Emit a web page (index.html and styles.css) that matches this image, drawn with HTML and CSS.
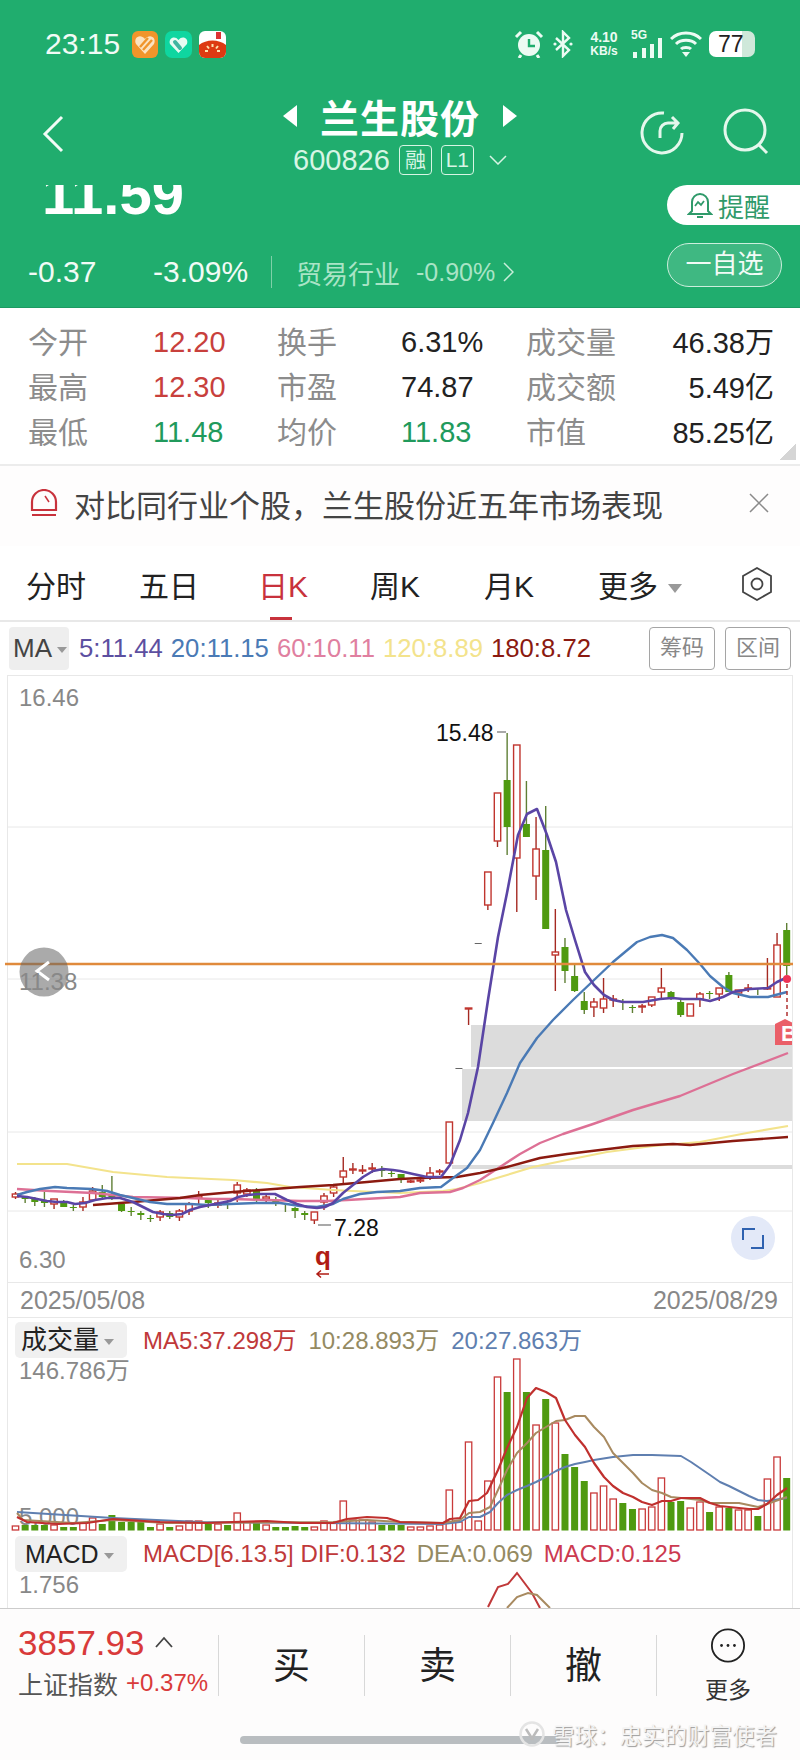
FILE: index.html
```html
<!DOCTYPE html>
<html lang="zh-CN">
<head>
  <meta charset="UTF-8" />
  <title>兰生股份</title>
  <link rel="stylesheet" href="styles.css">
</head>
<body>
  <div class="top">
    <div class="status">
      <span class="clock">23:15</span>
      <div class="apps">
        <svg width="26" height="27" viewBox="0 0 26 27"><rect width="26" height="27" rx="6" fill="#f0952b"/><path d="M13 23 L4 13 C1 7 8 2 13 8 C18 2 25 7 22 13 Z" fill="#fbe3c0"/><path d="M8 16 L16 7 M11 19 L20 9" stroke="#f0952b" stroke-width="2.4"/></svg>
        <svg width="27" height="27" viewBox="0 0 27 27"><rect width="27" height="27" rx="7" fill="#0fd6a0"/><path d="M13.5 22 L5 13 C3 7 10 4 13.5 9 C17 4 24 7 22 13 Z" fill="#e6fbf2"/><path d="M10 11 L15 17" stroke="#3fb5a0" stroke-width="4" stroke-linecap="round"/></svg>
        <svg width="27" height="27" viewBox="0 0 27 27"><rect width="27" height="27" rx="6" fill="#fff"/><path d="M0 14 C7 8 20 8 27 14 V21 a6 6 0 0 1 -6 6 H6 a6 6 0 0 1 -6 -6 Z" fill="#dd3a12"/><rect x="17" y="1" width="5" height="7" fill="#d33"/><path d="M13.5 13 v3 M8 15 l2 2.500 M19 15 l-2 2.500 M6 20 h3 M18 20 h3" stroke="#fde3b0" stroke-width="2"/></svg>
      </div>
      <div class="sys">
        <svg width="30" height="28" viewBox="0 0 30 28"><circle cx="15" cy="15" r="11" fill="#ecfbf3"/><path d="M15 9 V16 H21" stroke="#20ad6e" stroke-width="2.400" fill="none"/><path d="M2 7 L7 2 M28 7 L23 2 M7 25 L5 28 M23 25 L25 28" stroke="#ecfbf3" stroke-width="3"/></svg>
        <svg class="bt" width="22" height="28" viewBox="0 0 22 28"><path d="M4 8 L17 20 L11 26 V2 L17 8 L4 20" stroke="#ecfbf3" stroke-width="2.400" fill="none"/><circle cx="3" cy="14" r="1.600" fill="#ecfbf3"/><circle cx="19" cy="14" r="1.600" fill="#ecfbf3"/></svg>
        <div class="speed"><span>4.10</span><span class="unit">KB/s</span></div>
        <div class="net">
          <span class="net-g">5G</span>
          <svg width="32" height="20" viewBox="0 0 32 20"><path d="M2 14 h4 v6 h-4z M11 10 h4 v10 h-4z M19 6 h4 v14 h-4z M27 0 h4 v20 h-4z" fill="#ecfbf3"/></svg>
        </div>
        <svg width="32" height="28" viewBox="0 0 32 28"><path d="M1 9 C9 1 23 1 31 9 M6 14 C11 9 21 9 26 14 M11 19 C13 17 19 17 21 19" stroke="#ecfbf3" stroke-width="3" fill="none"/><path d="M12 22 h8 l-4 5z" fill="#ecfbf3"/></svg>
        <span class="battery">77</span>
      </div>
    </div>

    <div class="nav">
      <svg class="back" width="22" height="38" viewBox="0 0 22 38"><path d="M20 2 L3 19 L20 36" stroke="#f2fbf6" stroke-width="3" fill="none"/></svg>
      <div class="name">
        <div class="name-row">
          <svg width="14" height="22" viewBox="0 0 14 22"><path d="M14 0 V22 L0 11Z" fill="#fff"/></svg>
          <span class="name-text">兰生股份</span>
          <svg width="14" height="22" viewBox="0 0 14 22"><path d="M0 0 V22 L14 11Z" fill="#fff"/></svg>
        </div>
        <div class="code-row">
          <span class="code">600826</span>
          <span class="tag">融</span>
          <span class="tag">L1</span>
          <svg width="18" height="10" viewBox="0 0 18 10"><path d="M1 1 L9 9 L17 1" stroke="#d7f5e4" stroke-width="1.500" fill="none"/></svg>
        </div>
      </div>
      <div class="nav-tools">
        <svg class="tool-refresh" width="44" height="44" viewBox="0 0 44 44"><path d="M24 2 A20 20 0 1 0 42 22" stroke="#e4f7ec" stroke-width="3" fill="none"/><path d="M20 27 V20 a8 8 0 0 1 8 -8 h9 M32 6 l6 6 -5 6" stroke="#e4f7ec" stroke-width="3" fill="none"/></svg>
        <svg class="tool-search" width="50" height="50" viewBox="0 0 50 50"><circle cx="23" cy="22" r="20" stroke="#e4f7ec" stroke-width="3" fill="none"/><path d="M37 37 L45 45" stroke="#e4f7ec" stroke-width="3"/></svg>
      </div>
    </div>

    <div class="price-row">
      <div class="price"><span>11.59</span></div>
      <div class="remind">
        <svg width="26" height="28" viewBox="0 0 26 28"><path d="M5 20 V11 a8 8 0 0 1 16 0 V20 l3 3 H2 Z M10 26 h6" stroke="#2f9a6a" stroke-width="2" fill="none"/><path d="M8 15 l3 -4 3 3 3 -4" stroke="#2f9a6a" stroke-width="1.800" fill="none"/></svg>
        <span>提醒</span>
      </div>
    </div>

    <div class="change-row">
      <div class="change">
        <span class="chg chg-a">-0.37</span>
        <span class="chg chg-b">-3.09%</span>
        <span class="sector">贸易行业</span>
        <span class="sector-pct">-0.90%</span>
        <svg width="11" height="20" viewBox="0 0 11 20"><path d="M1 1 L10 10 L1 19" stroke="#c8eeda" stroke-width="1.500" fill="none"/></svg>
      </div>
      <span class="pick">一自选</span>
    </div>
  </div>

  <div class="quote">
    <span class="lbl">今开</span><span class="up">12.20</span>
    <span class="lbl">换手</span><span>6.31%</span>
    <span class="lbl">成交量</span><span class="end">46.38万</span>
    <span class="lbl">最高</span><span class="up">12.30</span>
    <span class="lbl">市盈</span><span>74.87</span>
    <span class="lbl">成交额</span><span class="end">5.49亿</span>
    <span class="lbl">最低</span><span class="down">11.48</span>
    <span class="lbl">均价</span><span class="down">11.83</span>
    <span class="lbl">市值</span><span class="end">85.25亿</span>
    <i class="corner"></i>
  </div>

  <div class="notice">
    <svg width="28" height="28" viewBox="0 0 28 28"><path d="M2 21 V13 a12 12 0 0 1 24 0 V21 Z M2 26 H26" stroke="#c8323c" stroke-width="2.200" fill="none"/><path d="M15 7 L19 13" stroke="#c8323c" stroke-width="1.500"/></svg>
    <span class="notice-text">对比同行业个股，兰生股份近五年市场表现</span>
    <svg class="notice-close" width="22" height="22" viewBox="0 0 22 22"><path d="M2 2 L20 20 M20 2 L2 20" stroke="#8a8a8a" stroke-width="1.500"/></svg>
  </div>

  <div class="tabs">
    <span class="tab">分时</span>
    <span class="tab">五日</span>
    <span class="tab active">日K</span>
    <span class="tab">周K</span>
    <span class="tab">月K</span>
    <span class="tab">更多<i class="tri"></i></span>
    <svg width="32" height="34" viewBox="0 0 32 34"><path d="M16 1 L30 9 V25 L16 33 L2 25 V9 Z" stroke="#444" stroke-width="1.800" fill="none"/><circle cx="16" cy="17" r="5.500" stroke="#444" stroke-width="1.800" fill="none"/></svg>
  </div>

  <div class="ma-row">
    <span class="ma-btn">MA<i class="tri tri-small"></i></span>
    <span class="ma ma5">5:11.44</span>
    <span class="ma ma20">20:11.15</span>
    <span class="ma ma60">60:10.11</span>
    <span class="ma ma120">120:8.89</span>
    <span class="ma ma180">180:8.72</span>
    <span class="ma-tool first">筹码</span>
    <span class="ma-tool">区间</span>
  </div>

  <div class="frame kline">
    <svg class="plot" width="784" height="606" viewBox="8 676 784 606">
      <path class="grid" d="M8 827 H792 M8 979 H792 M8 1132 H792 M8 1211 H792"/>
      <rect class="zone" x="471" y="1025" width="321" height="42"/>
      <rect class="zone" x="462" y="1069" width="330" height="52"/>
      <rect class="zone" x="452" y="1165" width="340" height="4"/>
      <g id="candles"></g>
      <g id="k-lines"></g>
      <path d="M5 964 H793" stroke="#e08a3c" stroke-width="2.400"/>
      <circle cx="44" cy="972" r="24.500" fill="rgba(100,100,100,0.55)"/>
      <path d="M49 962 L37 971 L49 980" stroke="#fff" stroke-width="3" fill="none"/>
      <text class="axis" x="19" y="706">16.46</text>
      <text class="axis" x="19" y="990">11.38</text>
      <text class="axis" x="19" y="1268">6.30</text>
      <text class="mark" x="436" y="741">15.48</text>
      <path d="M497 732 H506 M318 1225 H331" stroke="#555" stroke-width="1.200"/>
      <text class="mark" x="334" y="1236">7.28</text>
      <text class="flag" x="315" y="1265">q</text>
      <path d="M329 1274 H317 M321 1270.500 L317 1274 L321 1277.500" stroke="#b01c14" stroke-width="1.500" fill="none"/>
      <path d="M787 984 V1018" stroke="#b03030" stroke-width="1.500" stroke-dasharray="4 3"/>
      <circle cx="787" cy="979" r="4" fill="#ee3355"/>
      <clipPath id="frame-clip"><rect x="8" y="676" width="784" height="606"/></clipPath>
      <g clip-path="url(#frame-clip)">
        <path d="M775 1024 L785 1019 L795 1024 V1045 H775 Z" fill="#ea5f68"/>
        <text class="badge" x="781" y="1041">B</text>
      </g>
      <circle cx="753" cy="1238" r="22" fill="#e3e9f8"/>
      <path d="M743 1240 V1229 H755 M763 1235 V1248 H751" stroke="#2f62b0" stroke-width="2" fill="none"/>
    </svg>
  </div>

  <div class="frame dates">
    <span>2025/05/08</span>
    <span>2025/08/29</span>
  </div>

  <div class="frame panel">
    <div class="panel-head">
      <span class="pick-box">成交量<i class="tri tri-small"></i></span>
      <span class="red">MA5:37.298万</span>
      <span class="tan">10:28.893万</span>
      <span class="blue">20:27.863万</span>
    </div>
    <svg class="plot" width="784" height="175" viewBox="8 1358 784 175">
      <text class="axis" x="19" y="1379">146.786万</text>
      <text class="axis" x="19" y="1525">5.000</text>
      <g id="bars"></g>
      <g id="vol-lines"></g>
    </svg>
  </div>

  <div class="frame panel macd">
    <div class="panel-head">
      <span class="pick-box">MACD<i class="tri tri-small"></i></span>
      <span class="red">MACD[6.13.5] DIF:0.132</span>
      <span class="tan">DEA:0.069</span>
      <span class="pink">MACD:0.125</span>
    </div>
    <svg class="plot" width="784" height="36" viewBox="8 1572 784 36">
      <text class="axis" x="19" y="1593">1.756</text>
      <path d="M488 1607 L498 1587 L508 1584 L517 1573 L532 1593 L540 1608" stroke="#c0393a" stroke-width="2" fill="none"/>
      <path d="M507 1608 L517 1597 L528 1593 L537 1595 L550 1608" stroke="#a88a60" stroke-width="2" fill="none"/>
    </svg>
  </div>

  <div class="footer">
    <div class="trade">
      <div class="index">
        <div class="index-top">
          <span class="index-val">3857.93</span>
          <svg width="18" height="12" viewBox="0 0 18 12"><path d="M1 11 L9 2 L17 11" stroke="#444" stroke-width="1.800" fill="none"/></svg>
        </div>
        <div class="index-sub"><span class="index-name">上证指数</span><span class="index-pct">+0.37%</span></div>
      </div>
      <span class="act">买</span>
      <span class="act">卖</span>
      <span class="act">撤</span>
      <div class="more">
        <svg width="38" height="38" viewBox="0 0 38 38"><circle cx="19" cy="19" r="17.500" stroke="#222" stroke-width="2" fill="none"/><circle cx="12" cy="19" r="1.500" fill="#222"/><circle cx="19" cy="19" r="1.500" fill="#222"/><circle cx="26" cy="19" r="1.500" fill="#222"/></svg>
        <span>更多</span>
      </div>
    </div>
    <div class="home-bar"></div>
    <div class="watermark">
      <svg width="26" height="26" viewBox="0 0 26 26"><circle cx="13" cy="13" r="11.500" stroke="#e4e4e4" stroke-width="2.500" fill="none"/><path d="M7 8 L14 19 M19 8 L12 19" stroke="#bbb" stroke-width="2.500"/></svg>
      <span>雪球：忠实的财富使者</span>
    </div>
  </div>

  <script src="chart.js"></script>
</body>
</html>
```

FILE: styles.css
```css
* {
  box-sizing: border-box;
}
body {
  margin: 0;
  width: 800px;
  height: 1760px;
  overflow: hidden;
  background: #fff;
  color: #222;
  font-family: "Liberation Sans", "Noto Sans CJK SC", sans-serif;
}
i {
  font-style: normal;
}

/* green header */
.top {
  height: 308px;
  background: #20ad6e;
  color: #fff;
  border-bottom: 1px solid #1c9a62;
}
.status {
  height: 88px;
  padding: 0 45px;
  display: flex;
  align-items: center;
}
.clock {
  font-size: 30px;
  width: 87px;
  color: #f2fbf6;
}
.apps {
  display: flex;
  gap: 7px;
}
.sys {
  margin-left: auto;
  display: flex;
  align-items: center;
  color: #ecfbf3;
}
.bt {
  margin: 0 12px 0 8px;
}
.speed {
  width: 36px;
  display: flex;
  flex-direction: column;
  font-size: 14px;
  line-height: 14px;
  font-weight: 700;
  text-align: center;
}
.unit {
  font-size: 12px;
}
.net {
  width: 32px;
  margin: 0 7px 0 9px;
  height: 28px;
  position: relative;
  display: flex;
  align-items: flex-end;
}
.net-g {
  position: absolute;
  left: 0;
  top: -2px;
  font-size: 12px;
  font-weight: 700;
}
.battery {
  width: 46px;
  height: 26px;
  margin-left: 7px;
  padding-left: 9px;
  border-radius: 7px;
  background: linear-gradient(90deg, #fff 72%, #cfe8da 72%);
  color: #222;
  font-size: 23px;
  line-height: 26px;
}

.nav {
  height: 88px;
  padding: 0 28px;
  display: grid;
  grid-template-columns: 1fr auto 1fr;
}
.back {
  margin: 27px 0 0 14px;
}
.name {
  display: flex;
  flex-direction: column;
}
.name-row {
  height: 56px;
  display: flex;
  align-items: center;
  justify-content: center;
  gap: 23px;
}
.name-text {
  font-size: 39px;
  font-weight: 700;
  letter-spacing: 1px;
}
.code-row {
  height: 32px;
  display: flex;
  align-items: center;
  justify-content: center;
  gap: 9px;
  color: #d7f5e4;
}
.code {
  font-size: 29px;
}
.tag {
  width: 33px;
  height: 30px;
  border: 1.5px solid #d7f5e4;
  border-radius: 4px;
  font-size: 21px;
  line-height: 27px;
  text-align: center;
}
.code-row svg {
  margin-left: 6px;
}
.nav-tools {
  display: flex;
  justify-content: flex-end;
  gap: 38px;
  align-items: flex-start;
}
.tool-refresh {
  margin-top: 23px;
}
.tool-search {
  margin-top: 20px;
}

.price-row {
  margin-top: 9px;
  height: 40px;
  padding-left: 42px;
  display: flex;
  justify-content: space-between;
}
.price {
  height: 30px;
  display: flex;
  align-items: flex-end;
  overflow: hidden;
}
.price span {
  font-size: 58px;
  font-weight: 700;
  line-height: 1;
  margin-bottom: -8px;
}
.remind {
  width: 133px;
  height: 40px;
  background: #fff;
  border-radius: 20px 0 0 20px;
  padding-left: 20px;
  display: flex;
  align-items: center;
  gap: 5px;
  color: #2f9a6a;
  font-size: 26px;
}

.change-row {
  margin-top: 18px;
  height: 44px;
  padding: 0 18px 0 28px;
  display: flex;
  justify-content: space-between;
}
.change {
  display: flex;
  align-items: center;
  height: 32px;
  margin-top: 13px;
}
.chg {
  font-size: 30px;
  color: #f2fbf6;
}
.chg-a {
  width: 125px;
}
.chg-b {
  width: 119px;
  border-right: 1.5px solid #7fd0a8;
  height: 32px;
  line-height: 32px;
}
.sector {
  margin-left: 24px;
  font-size: 26px;
  color: #a9e4c6;
}
.sector-pct {
  margin: 0 8px 0 16px;
  font-size: 25px;
  color: #a9e4c6;
}
.pick {
  width: 115px;
  height: 44px;
  border: 1.5px solid #cdeedd;
  border-radius: 22px;
  background: rgba(255, 255, 255, 0.14);
  font-size: 26px;
  line-height: 40px;
  text-align: center;
  color: #f2fbf6;
}

/* quote table */
.quote {
  position: relative;
  height: 158px;
  padding: 12px 28px 0;
  border-bottom: 2px solid #ececec;
  display: grid;
  grid-template-columns: 125px 124px 124px 125px 114px 1fr;
  grid-auto-rows: 45px;
  align-items: center;
  font-size: 29px;
  color: #222;
}
.lbl {
  color: #8c8c8c;
  font-size: 30px;
  margin-bottom: 5px;
}
.up {
  color: #c8403c;
}
.down {
  color: #219a5c;
}
.end {
  text-align: right;
  margin: 0 -2px 5px 0;
}
.corner {
  position: absolute;
  right: 4px;
  bottom: 4px;
  width: 16px;
  height: 16px;
  background: linear-gradient(135deg, transparent 50%, #d5d5d5 50%);
}

.notice {
  height: 80px;
  padding: 0 30px 6px;
  display: flex;
  align-items: center;
  background: #fefdfd;
}
.notice-text {
  margin-left: 16px;
  font-size: 31px;
  color: #444;
}
.notice-close {
  margin-left: auto;
}

/* tabs */
.tabs {
  height: 76px;
  padding: 21px 0 0 26px;
  border-bottom: 2px solid #e8e8e8;
  display: grid;
  grid-template-columns: 113px 119px 112px 114px 114px 143px 1fr;
  align-items: start;
}
.tab {
  position: relative;
  font-size: 30px;
  line-height: 40px;
  color: #222;
}
.tab.active {
  color: #c8323c;
}
.tab.active::after {
  content: "";
  position: absolute;
  left: 12px;
  top: 50px;
  width: 22px;
  height: 3px;
  background: #c8323c;
}
.tri {
  display: inline-block;
  margin: 0 0 4px 10px;
  border-left: 7px solid transparent;
  border-right: 7px solid transparent;
  border-top: 9px solid #999;
}
.tri-small {
  margin: 0 0 4px 5px;
  border-left-width: 5px;
  border-right-width: 5px;
  border-top-width: 6px;
}

.ma-row {
  height: 53px;
  padding: 5px 9px;
  display: flex;
  align-items: center;
}
.ma-btn {
  width: 60px;
  height: 43px;
  margin-right: 10px;
  background: #eee;
  border-radius: 4px;
  padding-left: 4px;
  font-size: 26px;
  line-height: 43px;
  color: #444;
  white-space: nowrap;
}
.ma {
  margin-right: 8px;
  font-size: 25.700px;
  white-space: nowrap;
}
.ma5 {
  color: #5c4fa0;
}
.ma20 {
  color: #4a7ab5;
}
.ma60 {
  color: #e07fa0;
}
.ma120 {
  color: #f3e38c;
}
.ma180 {
  color: #8b1a10;
}
.ma-tool {
  width: 66px;
  height: 43px;
  margin-left: 10px;
  border: 1.5px solid #a5a5a5;
  border-radius: 4px;
  font-size: 22px;
  line-height: 40px;
  text-align: center;
  color: #888;
}
.ma-tool.first {
  margin-left: auto;
}

/* chart frames */
.frame {
  margin: 0 7px;
  border-left: 1px solid #e8e8e8;
  border-right: 1px solid #e8e8e8;
}
.plot {
  display: block;
  overflow: visible;
}
.kline {
  border-top: 1px solid #e8e8e8;
}
.grid {
  stroke: #e8e8e8;
  stroke-width: 1;
}
.zone {
  fill: #dcdcdc;
}
.axis {
  fill: #888;
  font-size: 24px;
}
.mark {
  fill: #111;
  font-size: 23px;
}
.flag {
  fill: #b01c14;
  font-size: 26px;
  font-weight: 700;
}
.badge {
  fill: #fff;
  font-size: 22px;
  font-weight: 700;
}
.dates {
  height: 36px;
  padding: 0 14px 0 12px;
  border-top: 1px solid #e8e8e8;
  border-bottom: 1px solid #e8e8e8;
  display: flex;
  justify-content: space-between;
  align-items: center;
  font-size: 25px;
  color: #888;
}
.panel-head {
  height: 40px;
  padding: 4px 0 0 7px;
  display: flex;
  align-items: center;
  font-size: 24px;
  white-space: nowrap;
}
.panel-head .red,
.panel-head .tan,
.panel-head .blue,
.panel-head .pink {
  margin: 0 12px 4px 0;
}
.pick-box {
  width: 112px;
  height: 36px;
  margin-right: 16px;
  padding-left: 6px;
  background: #f0f0f0;
  border-radius: 5px;
  font-size: 26px;
  line-height: 36px;
  color: #222;
}
.red {
  color: #c0393a;
}
.tan {
  color: #948a62;
}
.blue {
  color: #5f7fb0;
}
.pink {
  color: #cc3a50;
}
.macd .pick-box {
  padding-left: 10px;
  font-size: 25px;
}
.macd {
  height: 75px;
  overflow: hidden;
}
.macd .panel-head {
  height: 39px;
  padding-top: 3px;
}
.macd .panel-head .red,
.macd .panel-head .tan,
.macd .panel-head .pink {
  margin: 0 11px 0 0;
}

/* bottom bar */
.footer {
  position: relative;
  height: 152px;
  background: #fdfcfc;
  border-top: 1px solid #ccc;
}
.trade {
  height: 80px;
  margin-top: 16px;
  display: flex;
  align-items: center;
}
.index {
  width: 218px;
  height: 80px;
  padding-left: 18px;
}
.index-top {
  height: 36px;
  display: flex;
  align-items: center;
}
.index-top svg {
  margin: 0 0 2px 10px;
}
.index-val {
  font-size: 35px;
  color: #d93a3a;
}
.index-sub {
  margin-top: 7px;
  height: 30px;
  display: flex;
  align-items: center;
  white-space: nowrap;
}
.index-name {
  font-size: 25px;
  color: #555;
}
.index-pct {
  margin-left: 8px;
  font-size: 24px;
  color: #d93a3a;
}
.act {
  width: 146px;
  height: 61px;
  border-left: 1.5px solid #d8d8d8;
  font-size: 37px;
  line-height: 64px;
  text-align: center;
  color: #222;
}
.more {
  width: 144px;
  height: 80px;
  position: relative;
  display: flex;
  flex-direction: column;
  align-items: center;
  font-size: 23px;
  color: #333;
}
.more::before {
  content: "";
  position: absolute;
  left: 0;
  top: 10px;
  height: 61px;
  border-left: 1.5px solid #d8d8d8;
}
.more svg {
  margin: 3px 0 8px;
}
.home-bar {
  width: 320px;
  height: 8px;
  margin: 31px auto 0;
  background: #b9bdc0;
  border-radius: 4px;
}
.watermark {
  position: absolute;
  left: 519px;
  top: 109px;
  display: flex;
  align-items: center;
  gap: 7px;
  font-size: 22.500px;
  color: #f4f4f4;
  text-shadow: 1px 1px 1px #999;
}
```

FILE: chart.js
```js
// x of the n-th trading day
const dayX = n => 15.5 + 9.64 * n;
const SVG_NS = 'http://www.w3.org/2000/svg';

function add(parent, tag, attrs) {
  const el = document.createElementNS(SVG_NS, tag);
  for (const k in attrs) el.setAttribute(k, attrs[k]);
  parent.appendChild(el);
}

function line(parent, pts, color, width) {
  add(parent, 'polyline', {
    points: pts.map(p => p.join(',')).join(' '),
    fill: 'none',
    stroke: color,
    'stroke-width': width,
    'stroke-linejoin': 'round'
  });
}

// [colour, body top, body bottom, wick top, wick bottom]
const candles = [
  ['r',1194,1197,1192,1199],['g',1197,1199,1197,1203],['g',1199,1202,1197,1206],['g',1200,1203,1192,1207],
  ['r',1199,1204,1199,1209],['g',1202,1207,1200,1207],['g',1207,1208,1205,1211],['r',1202,1207,1197,1211],
  ['r',1191,1200,1187,1200],['g',1192,1197,1185,1199],['g',1195,1198,1176,1200],['g',1204,1211,1204,1212],
  ['g',1211,1212,1207,1216],['g',1213,1215,1211,1220],['g',1218,1219,1215,1222],['r',1212,1217,1210,1221],
  ['g',1213,1217,1211,1219],['r',1211,1217,1209,1221],['r',1204,1211,1202,1215],['r',1196,1198,1191,1204],
  ['g',1200,1203,1198,1208],['r',1203,1205,1200,1208],['g',1203,1204,1200,1209],['r',1185,1193,1182,1202],
  ['r',1190,1194,1188,1197],['g',1190,1200,1188,1204],['r',1197,1199,1193,1204],['g',1201,1202,1197,1206],
  ['g',1203,1204,1203,1212],['g',1208,1211,1207,1218],['g',1213,1215,1211,1220],['r',1212,1220,1212,1224],
  ['r',1196,1202,1193,1210],['r',1187,1193,1185,1197],['r',1171,1177,1157,1183],['r',1169,1170,1163,1174],
  ['r',1170,1171,1165,1174],['r',1168,1169,1163,1173],['g',1170,1171,1166,1177],['g',1173,1174,1170,1177],
  ['g',1174,1180,1174,1183],['r',1181,1182,1180,1183],['r',1180,1181,1177,1183],['r',1173,1177,1167,1180],
  ['r',1171,1172,1169,1175],['r',1122,1163,1122,1163],['d',1068,1069,1068,1069],['r',1008,1009,1008,1025],
  ['d',943,944,943,944],['r',872,905,872,910],['r',793,841,793,847],['g',780,827,733,855],
  ['r',745,858,745,912],['g',824,837,781,837],['r',849,876,817,900],['g',850,929,806,929],
  ['r',952,955,909,991],['g',947,971,938,983],['g',976,991,965,992],['g',1001,1010,992,1014],
  ['r',1002,1007,998,1017],['r',999,1008,978,1013],['r',999,1000,995,1007],['g',1001,1002,999,1010],
  ['g',1007,1008,1005,1013],['r',1006,1007,1004,1013],['r',997,1005,997,1007],['r',988,992,968,999],
  ['g',992,998,991,1000],['g',1002,1015,998,1017],['r',1004,1016,1004,1016],['r',994,999,992,1007],
  ['g',993,994,991,999],['r',988,994,988,1001],['g',975,992,972,992],['r',990,993,990,998],
  ['r',988,989,984,992],['g',988,989,988,995],['r',988,989,958,990],['r',945,997,933,997],
  ['g',930,966,923,975]
];

const candleGroup = document.getElementById('candles');
candles.forEach((c, n) => {
  const x = dayX(n);
  const dark = c[0] === 'd';
  const wick = c[0] === 'r' ? '#a52a22' : '#5f7f35';
  add(candleGroup, 'line', { x1: x, x2: x, y1: c[3], y2: c[4], stroke: wick, 'stroke-width': 1.4 });
  if (dark) {
    add(candleGroup, 'rect', { x: x - 3.5, y: c[1], width: 7, height: 1, fill: '#666' });
  } else if (c[0] === 'r') {
    add(candleGroup, 'rect', { x: x - 3.2, y: c[1], width: 6.4, height: c[2] - c[1], fill: '#fff', stroke: '#c0352e', 'stroke-width': 1.4 });
  } else {
    add(candleGroup, 'rect', { x: x - 3.5, y: c[1], width: 7, height: c[2] - c[1], fill: '#4f9a10' });
  }
});

const kLines = document.getElementById('k-lines');
line(kLines, [[17,1164],[67,1164],[113,1172],[167,1177],[233,1180],[267,1183],[290,1187],[333,1190],[353,1191],[377,1192],[400,1193],[443,1191],[457,1189],[480,1183],[507,1175],[533,1167],[567,1160],[607,1152],[653,1146],[700,1142],[747,1133],[788,1126]], '#f3e38c', 2.2);
line(kLines, [[17,1189],[50,1191],[93,1193],[133,1197],[187,1198],[213,1199],[233,1199],[267,1200],[300,1201],[327,1201],[347,1200],[400,1197],[420,1193],[450,1192],[463,1188],[480,1180],[500,1167],[520,1154],[540,1143],[563,1134],[593,1124],[633,1110],[680,1096],[733,1074],[788,1053]], '#dd7095', 2.4);
line(kLines, [[93,1205],[133,1202],[180,1198],[200,1195],[233,1192],[300,1187],[333,1185],[367,1182],[400,1179],[420,1178],[457,1177],[480,1173],[507,1167],[540,1158],[567,1154],[600,1150],[633,1146],[673,1144],[690,1145],[733,1141],[788,1137]], '#8b1a10', 2.4);
line(kLines, [[17,1195],[27,1192],[40,1189],[55,1187],[67,1188],[92,1189],[107,1191],[120,1195],[133,1198],[150,1202],[167,1204],[190,1204],[207,1205],[230,1204],[257,1203],[280,1203],[300,1206],[317,1207],[333,1204],[343,1199],[360,1194],[377,1192],[400,1191],[420,1188],[441,1187],[453,1178],[467,1168],[480,1150],[493,1123],[507,1093],[520,1063],[537,1038],[553,1020],[573,1000],[613,962],[637,942],[650,937],[662,935],[673,938],[687,950],[700,964],[710,976],[723,987],[733,993],[750,997],[768,997],[787,992]], '#4a7ab5', 2.4);
line(kLines, [[17,1196],[27,1197],[37,1199],[47,1201],[57,1202],[67,1202],[75,1204],[85,1203],[95,1200],[107,1198],[120,1198],[133,1202],[143,1207],[153,1212],[163,1214],[172,1215],[182,1214],[190,1210],[200,1207],[210,1205],[220,1203],[230,1201],[238,1197],[248,1195],[258,1194],[275,1194],[287,1200],[297,1204],[307,1207],[317,1208],[325,1207],[333,1203],[343,1193],[353,1185],[363,1177],[373,1171],[383,1169],[393,1170],[400,1171],[413,1174],[427,1177],[441,1177],[450,1165],[460,1140],[468,1113],[478,1067],[488,1000],[498,937],[507,893],[518,835],[527,814],[537,809],[547,835],[556,862],[566,910],[575,940],[585,972],[594,985],[604,995],[613,1000],[623,1002],[643,1002],[660,999],[672,998],[683,999],[700,999],[710,1001],[723,997],[733,992],[750,989],[768,988],[777,982],[788,977]], '#5a45a5', 2.6);

// volume bars: colour and top y, all standing on y = 1530
const tops = [
  'r1526','g1525','g1525','g1525','r1525','g1527','g1527','r1523','r1518','g1524','g1515','g1522',
  'g1522','g1522','g1527','r1524','g1527','r1526','r1521','r1521','g1524','r1524','g1525','r1513',
  'r1522','g1523','r1525','g1527','g1527','g1526','g1527','r1527','r1521','r1523','r1501','r1520',
  'r1520','r1522','g1525','g1525','g1525','r1527','r1527','r1526','r1525',
  'r1490','r1522','r1442','r1521','r1481','r1377','g1392','r1359','g1392','r1425','g1399','r1423',
  'g1454','g1467','g1481','r1493','r1486','r1499','g1503','g1509','r1509','r1507','r1478','g1502',
  'g1501','r1508','r1502','g1512','r1507','g1508','r1510','r1510','g1516','r1479','r1457','g1478'
];
const barGroup = document.getElementById('bars');
tops.forEach((t, n) => {
  const x = dayX(n);
  const y = Number(t.slice(1));
  if (t[0] === 'r') {
    add(barGroup, 'rect', { x: x - 3.2, y: y, width: 6.4, height: 1530 - y, fill: '#fff', stroke: '#c93a3a', 'stroke-width': 1.3 });
  } else {
    add(barGroup, 'rect', { x: x - 3.5, y: y, width: 7, height: 1530.5 - y, fill: '#4f9a10' });
  }
});

const volLines = document.getElementById('vol-lines');
line(volLines, [[17,1512],[113,1518],[200,1522],[443,1524],[460,1522],[469,1517],[480,1517],[490,1512],[498,1503],[507,1495],[517,1490],[527,1486],[536,1482],[546,1477],[556,1471],[565,1467],[575,1464],[585,1462],[594,1460],[613,1457],[633,1455],[652,1455],[681,1456],[691,1462],[710,1475],[720,1482],[729,1486],[749,1496],[758,1500],[767,1501],[787,1498]], '#5f7fb0', 2);
line(volLines, [[17,1513],[23,1520],[73,1523],[113,1520],[167,1523],[333,1522],[367,1520],[400,1522],[443,1523],[460,1520],[469,1513],[480,1512],[490,1507],[498,1490],[507,1470],[517,1453],[527,1443],[536,1433],[546,1427],[556,1421],[565,1420],[575,1416],[585,1416],[594,1427],[604,1437],[613,1453],[623,1463],[633,1473],[642,1483],[652,1490],[662,1493],[671,1497],[681,1498],[691,1499],[700,1500],[710,1503],[720,1503],[739,1503],[758,1507],[767,1504],[787,1497]], '#a88a60', 2);
line(volLines, [[17,1517],[27,1522],[57,1524],[87,1523],[113,1519],[160,1522],[207,1523],[233,1522],[267,1521],[300,1523],[333,1523],[347,1519],[367,1517],[387,1518],[400,1522],[443,1523],[450,1519],[460,1518],[469,1501],[478,1500],[487,1493],[498,1470],[507,1448],[517,1427],[527,1398],[536,1388],[546,1392],[556,1398],[565,1420],[575,1435],[585,1447],[594,1463],[604,1477],[613,1486],[623,1493],[633,1497],[642,1502],[652,1505],[662,1501],[671,1501],[681,1498],[691,1498],[700,1498],[710,1503],[720,1506],[729,1507],[739,1508],[749,1509],[758,1509],[767,1504],[777,1495],[787,1488]], '#c0302e', 2.2);
```
